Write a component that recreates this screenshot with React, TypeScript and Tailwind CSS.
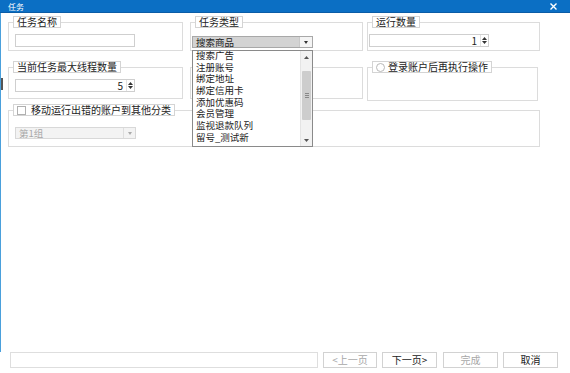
import type { ReactNode } from 'react';

function Group({ label, className, boxClass, children }: { label: ReactNode; className: string; boxClass: string; children?: ReactNode }) {
    return (
        <div className={`relative pt-[6px] ${className}`}>
            <div className={`h-full border border-[#dcdcdc] ${boxClass}`}>{children}</div>
            <div className="absolute left-[5px] top-0 flex h-[12px] items-center gap-[3px] border border-[#d4d4d4] bg-white px-[3px] text-[10px] leading-[10px] text-[#222]">
                {label}
            </div>
        </div>
    );
}

function Spin() {
    return (
        <div className="flex h-full w-[8px] flex-col items-center justify-center gap-[1px] border-l border-[#e2e2e2]">
            <svg width="5" height="3" viewBox="0 0 5 3"><path d="M0 3 L2.5 0 L5 3 Z" fill="#333" /></svg>
            <svg width="5" height="3" viewBox="0 0 5 3"><path d="M0 0 L2.5 3 L5 0 Z" fill="#333" /></svg>
        </div>
    );
}

function NumInput({ value }: { value: string }) {
    return (
        <div className="flex h-[13px] w-[120px] items-center justify-end border border-[#cfcfcf] bg-white">
            <span className="pr-[3px] text-[10px] leading-[10px] text-[#222]">{value}</span>
            <Spin />
        </div>
    );
}

const items = ['搜索广告', '注册账号', '绑定地址', '绑定信用卡', '添加优惠码', '会员管理', '监视退款队列', '留号_测试新'];

function Dropdown() {
    return (
        <div className="absolute left-[192px] top-[50px] flex h-[97px] w-[121px] border border-[#8a8a8a] bg-white">
            <div className="flex-1 overflow-hidden">
                <div className="-mt-[1px] pl-[3px]">
                    {items.map((it) => (
                        <div key={it} className="h-[11.7px] text-[9.5px] leading-[11.7px] text-[#222]">{it}</div>
                    ))}
                </div>
            </div>
            <div className="flex w-[12px] flex-col border-l border-[#e4e4e4] bg-[#f2f2f2]">
                <div className="flex h-[12px] items-center justify-center">
                    <svg width="5" height="3" viewBox="0 0 5 3"><path d="M0 3 L2.5 0 L5 3 Z" fill="#555" /></svg>
                </div>
                <div className="flex flex-1 flex-col px-[1px] pb-[14px] pt-[8px]">
                    <div className="flex flex-1 items-center justify-center rounded-[1px] bg-[#cdcdcd]">
                        <div className="flex flex-col gap-[1px]">
                            <div className="h-px w-[4px] bg-[#888]" />
                            <div className="h-px w-[4px] bg-[#888]" />
                            <div className="h-px w-[4px] bg-[#888]" />
                        </div>
                    </div>
                </div>
                <div className="flex h-[12px] items-center justify-center">
                    <svg width="5" height="3" viewBox="0 0 5 3"><path d="M0 0 L2.5 3 L5 0 Z" fill="#555" /></svg>
                </div>
            </div>
        </div>
    );
}

function Btn({ children, disabled, className }: { children: ReactNode; disabled?: boolean; className: string }) {
    return (
        <div className={`flex h-[16px] items-center justify-center border border-[#d2d2d2] bg-white text-[10px] leading-[10px] ${disabled ? 'text-[#a8a8a8]' : 'text-[#222]'} ${className}`}>
            {children}
        </div>
    );
}

export default function App() {
    return (
        <div className="relative flex h-[373px] w-[570px] flex-col overflow-hidden bg-white font-['Noto_Sans_CJK_SC','Noto_Sans',sans-serif]">
            <div className="flex h-[13px] items-center justify-between border-b border-[#0a5ca6] bg-[#0b6fc4] pl-[8px] pr-[13px] text-white">
                <span className="text-[8px] leading-[9px]">任务</span>
                <svg width="7" height="7" viewBox="0 0 7 7"><path d="M0.5 0.5 L6.5 6.5 M6.5 0.5 L0.5 6.5" stroke="#fff" strokeWidth="1.4" /></svg>
            </div>

            <div className="flex flex-1 flex-col border-l border-[#4aa0dc] pl-[7px] pt-[3px]">
                <div className="flex">
                    <Group label="任务名称" className="h-[35px] w-[175px]" boxClass="pl-[6px] pt-[11px]">
                        <div className="h-[13px] w-[120px] border border-[#cfcfcf] bg-white" />
                    </Group>
                    <Group label="任务类型" className="ml-[7px] h-[35px] w-[173px]" boxClass="pl-[1px] pt-[13px]">
                        <div className="flex h-[12px] w-[121px] border border-[#a8a8a8]">
                            <div className="flex flex-1 items-center bg-[#d3d3d3] pl-[3px] text-[9.5px] leading-[10px] text-[#222]">搜索商品</div>
                            <div className="flex w-[13px] items-center justify-center border-l border-[#c8c8c8] bg-[#f4f4f4]">
                                <svg width="4" height="3" viewBox="0 0 4 3"><path d="M0 0 L2 3 L4 0 Z" fill="#333" /></svg>
                            </div>
                        </div>
                    </Group>
                    <Group label="运行数量" className="ml-[4px] h-[35px] w-[173px]" boxClass="pl-[1px] pt-[11px]">
                        <NumInput value="1" />
                    </Group>
                </div>

                <div className="mt-[10px] flex">
                    <Group label="当前任务最大线程数量" className="h-[38px] w-[175px]" boxClass="pl-[6px] pt-[11px]">
                        <NumInput value="5" />
                    </Group>
                    <Group label="" className="ml-[7px] h-[38px] w-[173px]" boxClass="" />
                    <Group
                        label={
                            <>
                                <span className="h-[9px] w-[9px] rounded-full border border-[#b8b8b8] bg-white" />
                                <span>登录账户后再执行操作</span>
                            </>
                        }
                        className="ml-[4px] h-[40px] w-[171px]"
                        boxClass=""
                    />
                </div>

                <div className="mt-[3px] flex">
                    <Group
                        label={
                            <>
                                <span className="h-[9px] w-[9px] border border-[#b0b0b0] bg-white" />
                                <span className="ml-[2px]">移动运行出错的账户到其他分类</span>
                            </>
                        }
                        className="h-[43px] w-[532px]"
                        boxClass="pl-[6px] pt-[16px]"
                    >
                        <div className="flex h-[12px] w-[121px] border border-[#d8d8d8] bg-[#f3f3f3]">
                            <div className="flex flex-1 items-center pl-[3px] text-[9.5px] leading-[10px] text-[#a8a8a8]">第1组</div>
                            <div className="flex w-[12px] items-center justify-center border-l border-[#dedede]">
                                <svg width="4" height="3" viewBox="0 0 4 3"><path d="M0 0 L2 3 L4 0 Z" fill="#aaa" /></svg>
                            </div>
                        </div>
                    </Group>
                </div>
            </div>

            <div className="mb-[5px] flex items-center">
                <div className="ml-[10px] h-[16px] w-[308px] border border-[#dedede] bg-white" />
                <Btn disabled className="ml-[5px] w-[54px]">&lt;上一页</Btn>
                <Btn className="ml-[5px] w-[55px]">下一页&gt;</Btn>
                <Btn disabled className="ml-[6px] w-[55px]">完成</Btn>
                <Btn className="ml-[5px] w-[55px]">取消</Btn>
            </div>

            <div className="absolute left-[1px] top-[78px] h-[12px] w-[2px] bg-[#555]" />
            <Dropdown />
        </div>
    );
}
